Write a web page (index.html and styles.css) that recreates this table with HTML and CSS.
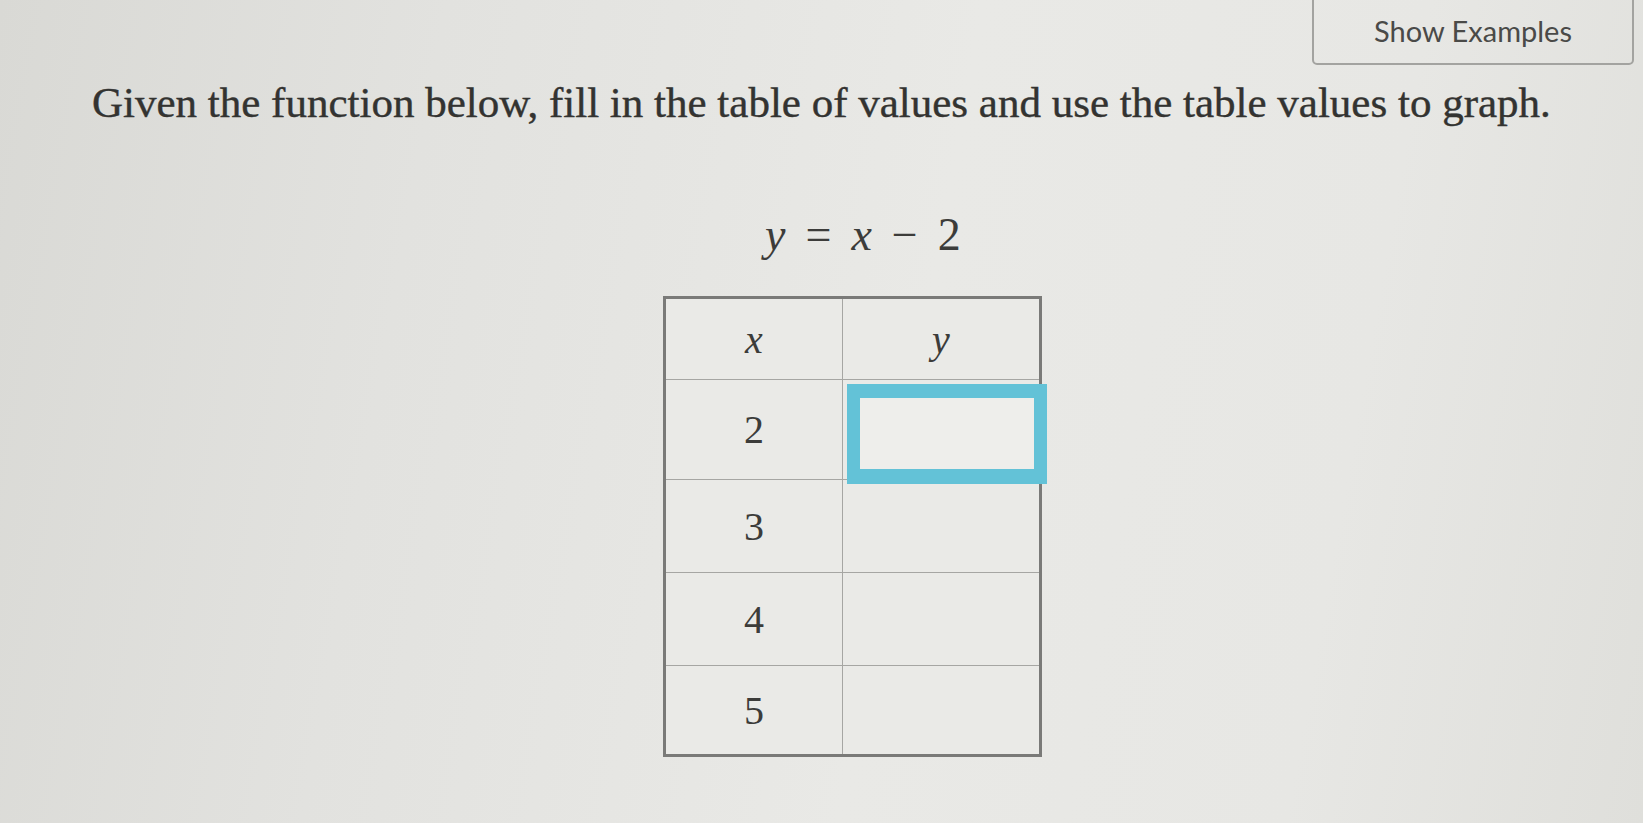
FILE: index.html
```html
<!DOCTYPE html>
<html>
<head>
<meta charset="utf-8">
<link rel="stylesheet" href="styles.css">
</head>
<body>
<div class="page">
  <div class="topbar">
    <button class="examples-btn">Show Examples</button>
  </div>
  <p class="prompt">Given the function below, fill in the table of values and use the table values to graph.</p>
  <div class="equation"><span class="var">y</span><span class="op">=</span><span class="var">x</span><span class="op">−</span><span class="num">2</span></div>
  <table class="values">
    <thead>
      <tr><th class="col-x"><span class="var">x</span></th><th class="col-y"><span class="var">y</span></th></tr>
    </thead>
    <tbody>
      <tr class="r1"><td class="col-x">2</td><td class="col-y"><div class="input active"></div></td></tr>
      <tr class="r2"><td class="col-x">3</td><td class="col-y"><div class="input"></div></td></tr>
      <tr class="r3"><td class="col-x">4</td><td class="col-y"><div class="input"></div></td></tr>
      <tr class="r4"><td class="col-x">5</td><td class="col-y"><div class="input"></div></td></tr>
    </tbody>
  </table>
</div>
</body>
</html>
```

FILE: styles.css
```css
html, body {
  margin: 0;
  padding: 0;
  height: 100%;
}
body {
  background: linear-gradient(100deg, #d9d9d5 0%, #e2e2df 25%, #e9e9e6 55%, #e7e7e4 80%, #dfdfdb 100%);
  overflow: hidden;
}
.page {
  display: flex;
  flex-direction: column;
  align-items: flex-start;
}
.topbar {
  align-self: stretch;
  display: flex;
  justify-content: flex-end;
  padding-right: 9px;
}
.examples-btn {
  margin-top: -8px;
  width: 322px;
  height: 73px;
  padding: 4px 0 0 0;
  background: transparent;
  border: 2px solid #a3a3a0;
  border-radius: 5px;
  font-family: Lato, "Open Sans", sans-serif;
  font-size: 29px;
  color: #4a4a48;
  text-align: center;
}
.prompt {
  margin: 13px 0 0 92px;
  font-family: "Liberation Serif", "Times New Roman", serif;
  font-size: 43px;
  line-height: 50px;
  color: #333331;
  -webkit-text-stroke: 0.4px #333331;
  white-space: nowrap;
}
.equation {
  margin: 80px 0 0 765px;
  display: flex;
  align-items: baseline;
  gap: 20px;
  font-family: "Liberation Serif", "Times New Roman", serif;
  font-size: 46px;
  line-height: 54px;
  color: #3c3c3a;
}
.var {
  font-style: italic;
}
.values {
  margin: 34px 0 0 663px;
  border-collapse: collapse;
  border: 3px solid #7a7a78;
  background: #eaeae7;
  font-family: "Liberation Serif", "Times New Roman", serif;
  font-size: 40px;
  color: #3c3c3a;
}
.values th, .values td {
  border: 1.5px solid #a6a6a3;
  text-align: center;
  padding: 0;
  font-weight: normal;
}
.values th {
  height: 80px;
}
.values td {
  height: 92px;
}
.values .r1 td {
  height: 99px;
}
.values .r4 td {
  height: 88px;
}
.col-x {
  width: 176px;
}
.col-y {
  width: 196px;
  position: relative;
}
.input {
  height: 88px;
}
.input.active {
  position: absolute;
  left: 4px;
  right: -8px;
  top: 4px;
  bottom: -5px;
  height: auto;
  border: 13px solid #63c2d7;
  border-top-width: 14px;
  border-bottom-width: 15px;
  background: #eeeeeb;
}
```
